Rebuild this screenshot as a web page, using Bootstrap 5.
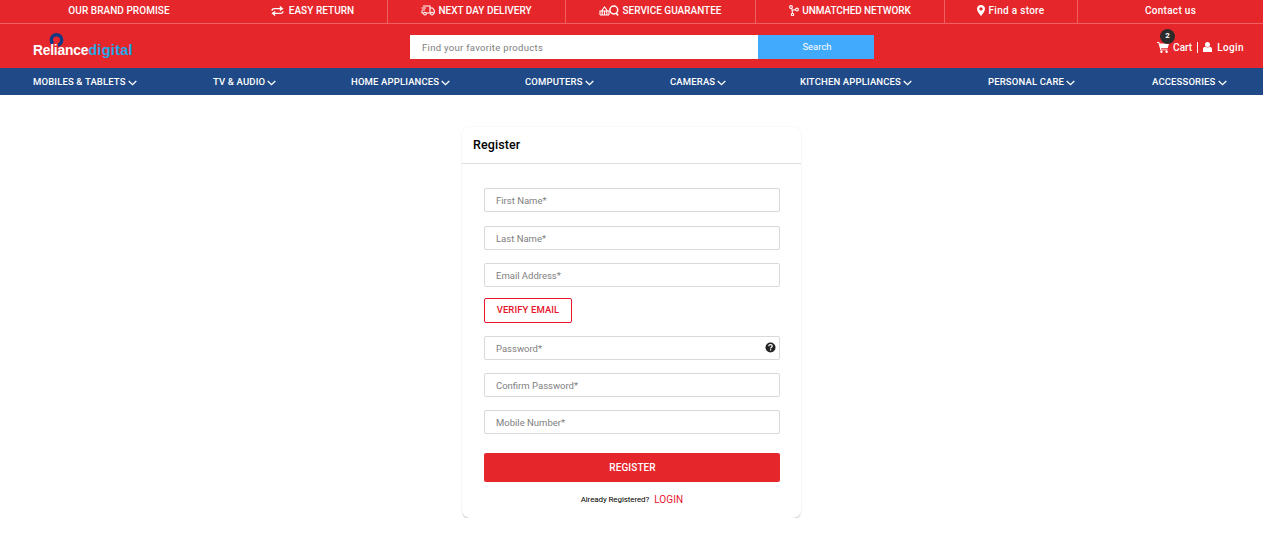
<!DOCTYPE html>
<html lang="en">
<head>
  <meta charset="UTF-8">
  <meta name="viewport" content="width=device-width, initial-scale=1">
  <title>Register</title>
  <link href="https://cdn.jsdelivr.net/npm/bootstrap@5.3.0/dist/css/bootstrap.min.css" rel="stylesheet">
  <style>
    body { font-family: Roboto, "Liberation Sans", sans-serif; color: #000; background: #fff; }
    .top-strip { display: grid; grid-template-columns: 238px 149px 178px 190px 189px 133px 1fr; height: 24px; background: #e5262b; border-bottom: 1px solid #ee5f60; }
    .top-cell { display: flex; align-items: center; justify-content: center; gap: 3px; padding-bottom: 2px; color: #fff; font-size: 10px; font-weight: 500; letter-spacing: 0; text-decoration: none; border-left: 1px solid #ee5f60; }
    .top-cell.no-line { border-left: 0; gap: 5px; letter-spacing: .05px; }
    .top-cell.mixed { letter-spacing: .3px; }
    .top-cell.tight { letter-spacing: -.1px; }
    .site-head { height: 44px; background: #e5262b; padding: 0 19px 0 33px; }
    .logo-box { position: relative; width: 100px; height: 44px; font-family: "Liberation Sans", sans-serif; font-weight: 700; font-size: 13.8px; line-height: 1; letter-spacing: -.2px; }
    .logo-mark { position: absolute; left: 16px; top: 9px; }
    .logo-text { position: absolute; left: 0; top: 19px; color: #fff; white-space: nowrap; }
    .logo-text span { color: #1fa8e8; font-size: 14.5px; letter-spacing: .3px; }
    .search-wrap { position: absolute; left: 410px; top: 35px; width: 464px; height: 24px; }
    .search-input { flex: 1; height: 24px; border: 0; border-radius: 0; padding: 0 12px; font-size: 9.5px; letter-spacing: .3px; outline: 0; }
    .search-input::placeholder { color: #7d7d7d; }
    .search-btn { width: 116px; height: 24px; border: 0; background: #42aafc; color: #fff; font-size: 9.5px; padding: 0 0 0 2px; }
    .head-right { color: #fff; font-size: 10px; font-weight: 500; letter-spacing: .3px; position: relative; margin-top: 2px; }
    .cart-label { letter-spacing: 0; }
    .cart-count { position: absolute; left: 3px; top: -11px; width: 15px; height: 15px; border-radius: 50%; background: #2b2b2b; color: #fff; font-size: 8px; font-weight: 700; letter-spacing: 0; display: flex; align-items: center; justify-content: center; }
    .head-split { width: 1px; height: 11px; background: #fff; margin: 0 5px; }
    .login-label { margin-left: 5px; letter-spacing: .4px; }
    .cat-strip { display: grid; grid-template-columns: 180px 138px 174px 145px 130px 188px 164px 1fr; align-items: center; height: 27px; background: #1f4a87; padding: 2px 0 0 33px; }
    .cat-link { color: #fff; font-size: 9.5px; font-weight: 500; letter-spacing: .15px; text-decoration: none; display: flex; align-items: center; gap: 2px; white-space: nowrap; }
    .register-box { width: 339px; height: 391px; margin: 32px auto 0; border: 0; border-radius: 8px; box-shadow: 0 2px 2px -1px rgba(0,0,0,.3), 0 0 2px rgba(0,0,0,.08); padding: 0; }
    .register-head { height: 37px; padding: 0 11px; display: flex; align-items: center; font-size: 12.5px; font-weight: 500; letter-spacing: .1px; border-bottom: 1px solid #dedede; }
    .register-body { padding: 24px 21px 0 22px; }
    .field-wrap { position: relative; margin-bottom: 13px; }
    .field-wrap:first-child { margin-bottom: 14px; }
    .field-input { height: 24px; min-height: 24px; border: 1px solid #d9d9d9; border-radius: 2px; padding: 0 11px; font-size: 9.5px; letter-spacing: 0; }
    .field-input::placeholder { color: #808080; }
    .help-mark { position: absolute; right: 4px; top: 6px; display: block; }
    .verify-btn { display: block; width: 88px; height: 25px; margin: -2px 0 13px; padding: 0; border: 1px solid #e6142d; border-radius: 2px; background: #fff; color: #e6142d; font-size: 9.5px; font-weight: 500; letter-spacing: .1px; }
    .register-btn { display: block; width: 100%; height: 29px; margin-top: 19px; padding: 0 0 0 1px; border: 0; border-radius: 2px; background: #e5262b; color: #fff; font-size: 10px; font-weight: 500; letter-spacing: .1px; }
    .login-line { margin-top: 11px; height: 13px; display: flex; justify-content: center; align-items: center; gap: 5px; font-size: 8px; letter-spacing: -.1px; }
    .login-line a { color: #e6142d; font-size: 10px; letter-spacing: .1px; text-decoration: none; }
  </style>
</head>
<body>

<div class="top-strip">
  <a class="top-cell no-line" href="#">OUR BRAND PROMISE</a>
  <a class="top-cell no-line" href="#">
    <svg width="13" height="10" viewBox="0 0 13 10" fill="none" stroke="#fff" stroke-width="1.2"><path d="M1 4.8 C1 3 2 2.7 3.5 2.7 H11 M8.8 .5 L11.5 2.7 L8.8 4.5"/><path d="M12 5.2 C12 7 11 7.3 9.5 7.3 H2 M4.2 5.5 L1.5 7.3 L4.2 9.5"/></svg>
    EASY RETURN
  </a>
  <a class="top-cell" href="#">
    <svg width="14" height="11" viewBox="0 0 14 11" fill="none" stroke="#fff" stroke-width="1.1"><path d="M2 1 H9 V8 H5.5 M2.5 8 H1 V5.5"/><path d="M9 3 H11.5 L13.3 5.4 V8 H12.3 M9 8 H9.8"/><circle cx="4" cy="8.6" r="1.4"/><circle cx="11" cy="8.6" r="1.4"/><path d="M.5 3 H5 M1 5 H4"/></svg>
    NEXT DAY DELIVERY
  </a>
  <a class="top-cell" href="#">
    <svg width="20" height="11" viewBox="0 0 20 11" fill="none" stroke="#fff" stroke-width="1.1"><path d="M1 10 V6 H10 V10 M1 10 H10 M2.5 6 L5.5 2 L8.5 6 M3.2 10 V6.5 M5.5 10 V6.5 M7.8 10 V6.5"/><circle cx="14.8" cy="5" r="3.9" stroke-width="1.5"/><path d="M16.8 8 L19.2 10.4" stroke-width="1.5"/></svg>
    SERVICE GUARANTEE
  </a>
  <a class="top-cell tight" href="#">
    <svg width="10" height="11" viewBox="0 0 10 11" fill="none" stroke="#fff" stroke-width="1.1"><circle cx="2" cy="2" r="1.4"/><circle cx="8" cy="4.5" r="1.4"/><circle cx="3.5" cy="9.5" r="1.2"/><path d="M2.8 3.2 L3.5 8.3 M3.2 5.2 L6.6 4.6"/></svg>
    UNMATCHED NETWORK
  </a>
  <a class="top-cell mixed" href="#">
    <svg width="8" height="11" viewBox="0 0 8 11"><path fill="#fff" fill-rule="evenodd" d="M4 0 C1.8 0 0 1.7 0 3.9 C0 6.3 2.6 9 4 11 C5.4 9 8 6.3 8 3.9 C8 1.7 6.2 0 4 0 Z M4 2.2 A1.7 1.7 0 1 1 4 5.6 A1.7 1.7 0 1 1 4 2.2 Z"/></svg>
    Find a store
  </a>
  <a class="top-cell mixed" href="#">Contact us</a>
</div>

<div class="site-head d-flex align-items-center justify-content-between">
  <a class="logo-box d-block text-decoration-none" href="#">
    <svg class="logo-mark" width="15" height="14" viewBox="0 0 15 14"><circle cx="7.5" cy="7" r="5.2" fill="none" stroke="#123a84" stroke-width="3.4"/><path fill="#e5262b" d="M2 14 L6.5 7 H9 V14 Z"/></svg>
    <span class="logo-text">Reliance<span>digital</span></span>
  </a>
  <form class="search-wrap d-flex" onsubmit="return false">
    <input class="search-input" type="text" placeholder="Find your favorite products">
    <button class="search-btn" type="submit">Search</button>
  </form>
  <div class="head-right d-flex align-items-center">
    <span class="cart-count">2</span>
    <svg class="me-1" width="12" height="11" viewBox="0 0 12 11"><path fill="#fff" d="M0 0 H2.2 L2.7 1.6 H12 L10.7 6.2 H4 L4.3 7.4 H10.5 V8.3 H3.4 L1.5 .9 H0 Z"/><circle cx="4.4" cy="9.7" r="1.2" fill="#fff"/><circle cx="9.6" cy="9.7" r="1.2" fill="#fff"/></svg>
    <span class="cart-label">Cart</span>
    <span class="head-split"></span>
    <svg width="9" height="10" viewBox="0 0 9 10"><circle cx="4.5" cy="2.6" r="2.5" fill="#fff"/><path fill="#fff" d="M0 10 V7.3 C0 5.8 1 5 2.2 4.8 C3.5 5.8 5.5 5.8 6.8 4.8 C8 5 9 5.8 9 7.3 V10 Z"/></svg>
    <span class="login-label">Login</span>
  </div>
</div>

<nav class="cat-strip">
  <a class="cat-link" href="#">MOBILES &amp; TABLETS <svg width="9" height="6" viewBox="0 0 9 6" fill="none" stroke="#fff" stroke-width="1.3"><path d="M.7 1 L4.5 4.7 L8.3 1"/></svg></a>
  <a class="cat-link" href="#">TV &amp; AUDIO <svg width="9" height="6" viewBox="0 0 9 6" fill="none" stroke="#fff" stroke-width="1.3"><path d="M.7 1 L4.5 4.7 L8.3 1"/></svg></a>
  <a class="cat-link" href="#">HOME APPLIANCES <svg width="9" height="6" viewBox="0 0 9 6" fill="none" stroke="#fff" stroke-width="1.3"><path d="M.7 1 L4.5 4.7 L8.3 1"/></svg></a>
  <a class="cat-link" href="#">COMPUTERS <svg width="9" height="6" viewBox="0 0 9 6" fill="none" stroke="#fff" stroke-width="1.3"><path d="M.7 1 L4.5 4.7 L8.3 1"/></svg></a>
  <a class="cat-link" href="#">CAMERAS <svg width="9" height="6" viewBox="0 0 9 6" fill="none" stroke="#fff" stroke-width="1.3"><path d="M.7 1 L4.5 4.7 L8.3 1"/></svg></a>
  <a class="cat-link" href="#">KITCHEN APPLIANCES <svg width="9" height="6" viewBox="0 0 9 6" fill="none" stroke="#fff" stroke-width="1.3"><path d="M.7 1 L4.5 4.7 L8.3 1"/></svg></a>
  <a class="cat-link" href="#">PERSONAL CARE <svg width="9" height="6" viewBox="0 0 9 6" fill="none" stroke="#fff" stroke-width="1.3"><path d="M.7 1 L4.5 4.7 L8.3 1"/></svg></a>
  <a class="cat-link" href="#">ACCESSORIES <svg width="9" height="6" viewBox="0 0 9 6" fill="none" stroke="#fff" stroke-width="1.3"><path d="M.7 1 L4.5 4.7 L8.3 1"/></svg></a>
</nav>

<div class="card register-box">
  <div class="register-head">Register</div>
  <form class="register-body" onsubmit="return false">
    <div class="field-wrap"><input class="form-control field-input" type="text" placeholder="First Name*"></div>
    <div class="field-wrap"><input class="form-control field-input" type="text" placeholder="Last Name*"></div>
    <div class="field-wrap"><input class="form-control field-input" type="email" placeholder="Email Address*"></div>
    <button class="verify-btn" type="button">VERIFY EMAIL</button>
    <div class="field-wrap">
      <input class="form-control field-input" type="password" placeholder="Password*">
      <svg class="help-mark" width="11" height="11" viewBox="0 0 11 11"><circle cx="5.5" cy="5.5" r="5" fill="#222"/><path d="M3.7 4.2 C3.8 3 4.6 2.6 5.5 2.6 C6.6 2.6 7.3 3.2 7.3 4.1 C7.3 5.3 5.6 5.3 5.6 6.4" fill="none" stroke="#fff" stroke-width="1.2"/><rect x="4.9" y="7.2" width="1.3" height="1.3" fill="#fff"/></svg>
    </div>
    <div class="field-wrap"><input class="form-control field-input" type="password" placeholder="Confirm Password*"></div>
    <div class="field-wrap"><input class="form-control field-input" type="tel" placeholder="Mobile Number*"></div>
    <button class="register-btn" type="submit">REGISTER</button>
    <div class="login-line"><span>Already Registered?</span> <a href="#">LOGIN</a></div>
  </form>
</div>

<script src="https://cdn.jsdelivr.net/npm/bootstrap@5.3.0/dist/js/bootstrap.bundle.min.js"></script>
</body>
</html>
